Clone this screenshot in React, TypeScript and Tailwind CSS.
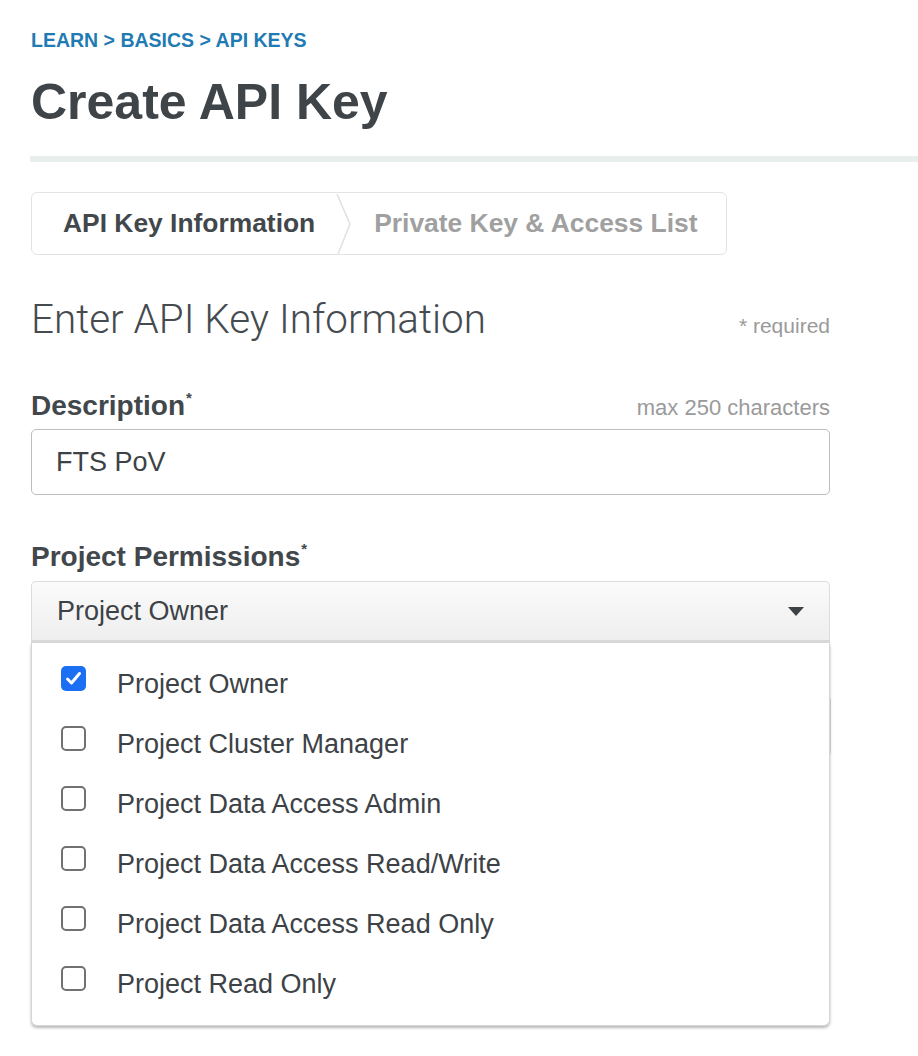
import React from "react";

const permissions = [
  { label: "Project Owner", checked: true },
  { label: "Project Cluster Manager", checked: false },
  { label: "Project Data Access Admin", checked: false },
  { label: "Project Data Access Read/Write", checked: false },
  { label: "Project Data Access Read Only", checked: false },
  { label: "Project Read Only", checked: false },
];

function Checkbox({ checked }: { checked: boolean }) {
  if (checked) {
    return (
      <span className="mt-[12px] flex h-[25px] w-[25px] shrink-0 items-center justify-center rounded-[5px] bg-[#1a6ff3]">
        <svg width="17" height="15" viewBox="0 0 17 15" fill="none">
          <path d="M2.5 8 L6.5 12 L14.5 2.5" stroke="#ffffff" strokeWidth="3" strokeLinecap="round" strokeLinejoin="round" />
        </svg>
      </span>
    );
  }
  return <span className="mt-[12px] block h-[25px] w-[25px] shrink-0 rounded-[5px] border-2 border-[#717171] bg-white" />;
}

function FieldLabel({ children, hint }: { children: React.ReactNode; hint?: string }) {
  return (
    <div className="flex h-[34px] w-[799px] items-baseline justify-between">
      <span className="text-[28px] leading-[34px] font-bold text-[#42474b]">
        {children}
        <span className="relative -top-[12px] ml-[1px] text-[15px]">*</span>
      </span>
      {hint && <span className="text-[22px] text-[#9a9a9a]">{hint}</span>}
    </div>
  );
}

export default function App() {
  return (
    <div className="min-h-[1056px] bg-white pl-[31px] pt-[28px] font-['Liberation_Sans',Arial,sans-serif] text-[#3d4246]">
      <div className="text-[19.5px] leading-[24px] font-bold text-[#1f7bb3]">LEARN &gt; BASICS &gt; API KEYS</div>
      <h1 className="mt-[20px] text-[50px] leading-[60px] font-bold text-[#3f4448]">Create API Key</h1>

      <div className="mt-[24px] -ml-[1px] h-[6px] bg-[#e8eeec]" />

      <div className="mt-[30px] inline-flex h-[63px] items-stretch rounded-[6px] border-[1.5px] border-[#e3e3e3]">
        <div className="flex items-center pl-[31px] pr-[21px] text-[26.4px] font-bold text-[#42474b]">API Key Information</div>
        <svg width="16" height="60" viewBox="0 0 16 60" className="shrink-0 self-center">
          <path d="M1 0 L14 30 L2 60" stroke="#e0e0e0" strokeWidth="1.5" fill="none" />
        </svg>
        <div className="flex items-center pl-[22px] pr-[29px] text-[26.4px] font-bold text-[#a0a0a0]">Private Key &amp; Access List</div>
      </div>

      <div className="mt-[41px] flex w-[799px] items-baseline justify-between">
        <h2 className="font-['Roboto',sans-serif] text-[40.4px] leading-[48px] font-light text-[#464b50]">Enter API Key Information</h2>
        <span className="text-[21px] text-[#9a9a9a]">* required</span>
      </div>

      <div className="mt-[45px]">
        <FieldLabel hint="max 250 characters">Description</FieldLabel>
        <div className="mt-[6px] flex h-[66px] w-[799px] items-center rounded-[5px] border-[1.5px] border-[#bdbdbd] pl-[24px] text-[27px] text-[#3d4246]">
          FTS PoV
        </div>
      </div>

      <div className="mt-[45px]">
        <FieldLabel>Project Permissions</FieldLabel>
        <div className="relative mt-[7px] w-[799px]">
          <div className="flex h-[62px] items-center justify-between rounded-t-[5px] border border-b-[3px] border-[#dcdcdc] border-b-[#d8d8d8] bg-gradient-to-b from-[#fbfbfb] to-[#eeeeee] pl-[25px] pr-[25px]">
            <span className="text-[27px] text-[#3d4246]">Project Owner</span>
            <svg width="16" height="9" viewBox="0 0 16 9">
              <path d="M0 0 H16 L8 9 Z" fill="#3d4246" />
            </svg>
          </div>

          <div className="absolute left-0 top-full z-10 w-[799px] rounded-b-[6px] border border-t-0 border-[#d6d6d6] bg-white py-[11px] shadow-[0_2px_3px_rgba(0,0,0,0.28)]">
            {permissions.map((p) => (
              <div key={p.label} className="flex h-[60px] items-start pl-[29px]">
                <Checkbox checked={p.checked} />
                <span className="ml-[31px] text-[27px] leading-[60px] text-[#3d4246]">{p.label}</span>
              </div>
            ))}
          </div>
        </div>
        <div className="mt-[52px] h-[62px] w-[800px] rounded-[5px] border border-[#d5dfdd]" />
      </div>
    </div>
  );
}
